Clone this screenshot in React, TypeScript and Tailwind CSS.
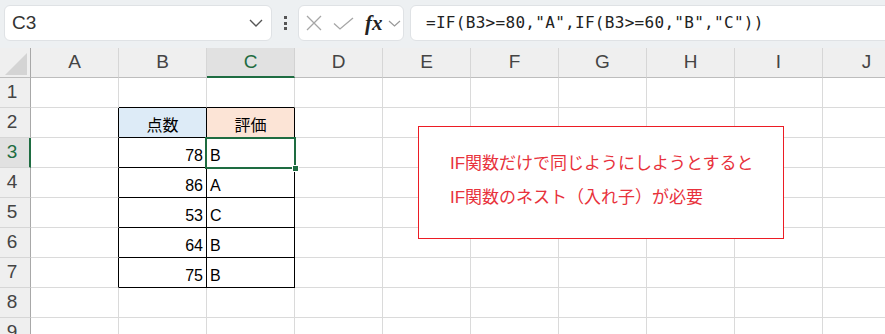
import React from "react";

const COLS = ["A", "B", "C", "D", "E", "F", "G", "H", "I", "J"];
const ROWS = [1, 2, 3, 4, 5, 6, 7, 8, 9];

const TABLE: Record<number, [string, string]> = {
  2: ["点数", "評価"],
  3: ["78", "B"],
  4: ["86", "A"],
  5: ["53", "C"],
  6: ["64", "B"],
  7: ["75", "B"],
};

function cellClass(row: number, col: string) {
  const inTable = row >= 2 && row <= 7;
  if (inTable && (col === "B" || col === "C")) {
    if (row === 2 && col === "B") return "border-r border-b border-r-black border-b-black bg-[#ddebf7]";
    if (row === 2 && col === "C") return "border-r border-b border-r-black border-b-black bg-[#fce4d6]";
    return "border-r border-b border-r-black border-b-black bg-white";
  }
  if (inTable && col === "A") return "border-r border-b border-r-black border-b-[#dadada] bg-white";
  if (row === 1 && (col === "B" || col === "C")) return "border-r border-b border-r-[#dadada] border-b-black bg-white";
  return "border-r border-b border-[#dadada] bg-white";
}

function Cell({ row, col }: { row: number; col: string }) {
  const data = TABLE[row];
  let content: React.ReactNode = null;
  let align = "justify-start pl-[3px]";
  if (data && col === "B") {
    content = data[0];
    align = row === 2 ? "justify-center" : "justify-end pr-[3px]";
  } else if (data && col === "C") {
    content = data[1];
    align = row === 2 ? "justify-center" : "justify-start pl-[3px]";
  }
  const selected = row === 3 && col === "C";
  return (
    <div className={`relative flex h-[30px] items-end pb-[2px] ${align} ${cellClass(row, col)}`}>
      <span className="text-[16px] leading-[18px] text-black">{content}</span>
      {selected && (
        <>
          <div className="absolute left-[-2px] top-[-1px] z-10 h-[32px] w-[91px] border-2 border-[#1e6c41]" />
          <div className="absolute right-[-5px] bottom-[-5px] z-10 h-[7px] w-[7px] border border-white bg-[#1e6c41]" />
        </>
      )}
    </div>
  );
}

export default function App() {
  return (
    <div className="relative h-[334px] w-[885px] overflow-hidden bg-white font-['Liberation_Sans','Noto_Sans_CJK_JP',sans-serif] text-[#333]">
      {/* formula bar */}
      <div className="flex h-[48px] items-start bg-[#edf0f2] pl-[4px] pt-[5px]">
        <div className="flex h-[36px] w-[268px] items-center justify-between rounded-[6px] border border-[#dfe2e5] bg-white pl-[7px] pr-[8px]">
          <span className="text-[19px] text-[#333]">C3</span>
          <svg width="14" height="8" viewBox="0 0 14 8" fill="none">
            <path d="M1 1l6 6 6-6" stroke="#555" strokeWidth="1.4" />
          </svg>
        </div>
        <div className="flex h-[36px] w-[26px] flex-col items-center justify-center gap-[2.5px]">
          <span className="h-[3px] w-[3px] bg-[#555]" />
          <span className="h-[3px] w-[3px] bg-[#555]" />
          <span className="h-[3px] w-[3px] bg-[#555]" />
        </div>
        <div className="flex h-[36px] w-[106px] items-center rounded-[6px] border border-[#dfe2e5] bg-white pl-[7px]">
          <svg width="16" height="16" viewBox="0 0 16 16" fill="none">
            <path d="M1 1l14 14M15 1L1 15" stroke="#a6a6a6" strokeWidth="1.3" />
          </svg>
          <svg className="ml-[11px]" width="21" height="13" viewBox="0 0 21 13" fill="none">
            <path d="M1 6.5l6 5.5L20 1" stroke="#a6a6a6" strokeWidth="1.3" />
          </svg>
          <span className="ml-[11px] font-['Liberation_Serif',serif] text-[21px] font-bold italic leading-none text-[#222]">fx</span>
          <svg className="ml-[5px]" width="13" height="7" viewBox="0 0 13 7" fill="none">
            <path d="M1 1l5.5 5 5.5-5" stroke="#999" strokeWidth="1.2" />
          </svg>
        </div>
        <div className="ml-[6px] mr-[-12px] flex h-[36px] flex-1 items-center rounded-[6px] border border-[#dfe2e5] bg-white pl-[15px]">
          <span className="font-['DejaVu_Sans_Mono',monospace] text-[16px] tracking-[0.3px] text-[#222]">
            =IF(B3&gt;=80,"A",IF(B3&gt;=60,"B","C"))
          </span>
        </div>
      </div>

      {/* sheet */}
      <div className="grid grid-cols-[31px_repeat(9,88px)_88px]">
        <div className="relative h-[30px] border-r border-b border-r-[#a8a8a8] border-b-[#bdbdbd] bg-[#efefef]">
          <svg className="absolute left-[5px] top-[5px]" width="22" height="22" viewBox="0 0 22 22">
            <polygon points="22,0 22,22 0,22" fill="#d4d4d4" />
          </svg>
        </div>
        {COLS.map((c) =>
          c === "C" ? (
            <div key={c} className="flex h-[30px] items-center justify-center border-r border-b-2 border-r-[#d2d2d2] border-b-[#1e6c41] bg-[#e1e1e1] text-[19px] text-[#1e6c41]">
              {c}
            </div>
          ) : (
            <div key={c} className="flex h-[30px] items-center justify-center border-r border-b border-r-[#d6d6d6] border-b-[#bdbdbd] bg-[#efefef] text-[19px] text-[#444]">
              {c}
            </div>
          )
        )}

        {ROWS.map((r) => (
          <React.Fragment key={r}>
            {r === 3 ? (
              <div className="flex h-[30px] items-center justify-center border-r-2 border-b border-r-[#1e6c41] border-b-[#d6d6d6] bg-[#e1e1e1] pr-[5px] text-[19px] text-[#1e6c41]">
                {r}
              </div>
            ) : (
              <div className="flex h-[30px] items-center justify-center border-r border-b border-r-[#a8a8a8] border-b-[#d6d6d6] bg-[#efefef] pr-[6px] text-[19px] text-[#444]">
                {r}
              </div>
            )}
            {COLS.map((c) => (
              <Cell key={c} row={r} col={c} />
            ))}
          </React.Fragment>
        ))}
      </div>

      {/* text box over the sheet */}
      <div className="absolute left-[418px] top-[126px] z-20 flex h-[113px] w-[366px] flex-col border border-[#ec1c24] bg-white pl-[31px] pt-[20px] text-[17px] leading-[34px] text-[#e8323c]">
        <span>IF関数だけで同じようにしようとすると</span>
        <span>IF関数のネスト（入れ子）が必要</span>
      </div>
    </div>
  );
}
